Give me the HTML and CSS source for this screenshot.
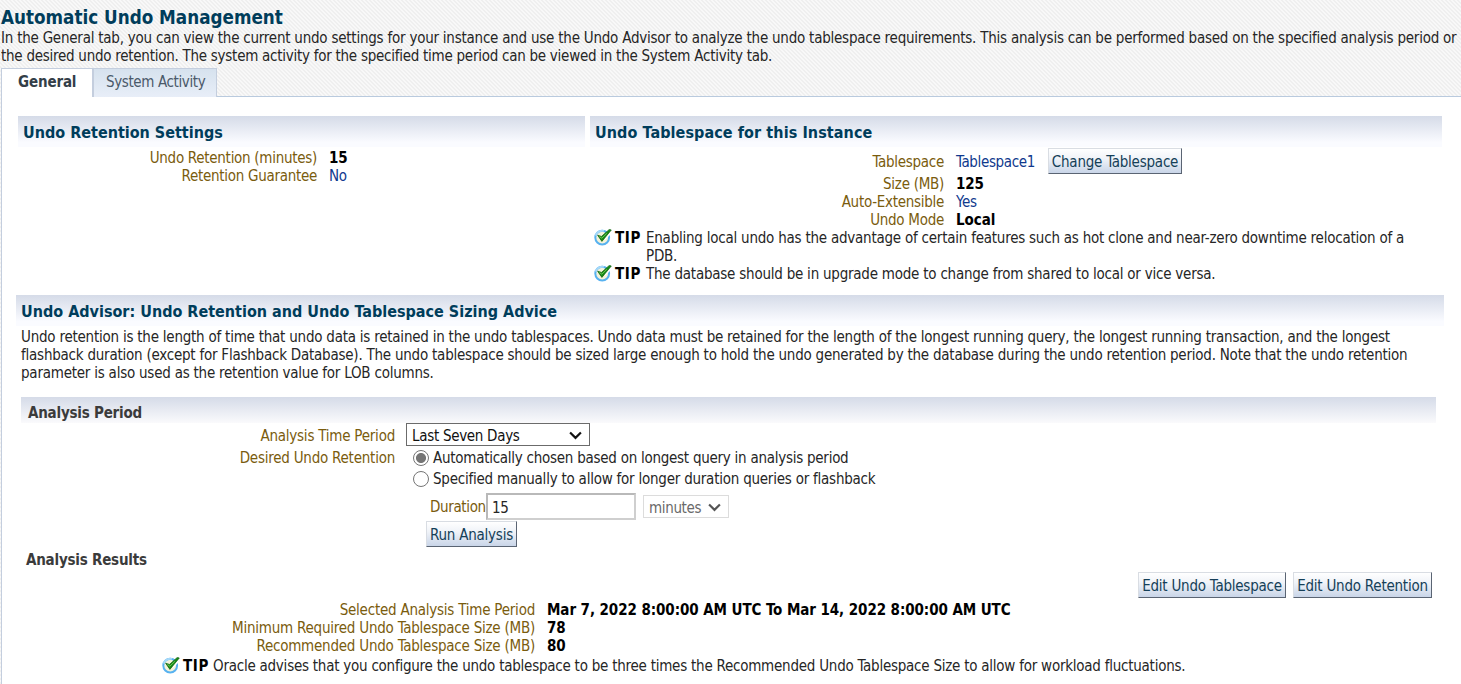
FILE: index.html
```html
<!DOCTYPE html>
<html lang="en">
<head>
<meta charset="utf-8">
<title>Automatic Undo Management</title>
<link rel="stylesheet" href="styles.css">
</head>
<body>
<svg width="0" height="0" class="defs" aria-hidden="true">
  <symbol id="tip" viewBox="0 0 18 17">
    <circle cx="8.2" cy="8.6" r="6.9" fill="#f5f3da" stroke="#58b2f0" stroke-width="2"/>
    <path d="M1.6 6.6A6.9 6.9 0 0 1 10 1.9" fill="none" stroke="#a5d8f8" stroke-width="2"/>
    <path d="M10.5 9.8L17.6 2.4" fill="none" stroke="#fff" stroke-width="2.6"/>
    <path d="M3.6 6.2l3.9 1.2 7.8-7 2 .6L7.9 12.4z" fill="#168a16" stroke="#0b5f0b" stroke-width=".7"/>
    <path d="M5.4 7.6l2.4 1.6 5-4.8" fill="none" stroke="#6cc455" stroke-width="1"/>
  </symbol>
</svg>
<header class="page-head">
  <h1>Automatic Undo Management</h1>
  <p>In the General tab, you can view the current undo settings for your instance and use the Undo Advisor to analyze the undo tablespace requirements. This analysis can be performed based on the specified analysis period or<br><span class="tight">the desired undo retention. The system activity for the specified time period can be viewed in the System Activity tab.</span></p>
</header>
<nav class="tabs">
  <a class="tab active">General</a>
  <a class="tab">System Activity</a>
  <span class="tab-line"></span>
</nav>
<main class="panel">
  <div class="columns">
    <section>
      <h2>Undo Retention Settings</h2>
      <dl class="fields retention">
        <dt>Undo Retention (minutes)</dt><dd><b>15</b></dd>
        <dt>Retention Guarantee</dt><dd><a>No</a></dd>
      </dl>
    </section>
    <section>
      <h2 class="wide">Undo Tablespace for this Instance</h2>
      <dl class="fields tablespace">
        <dt>Tablespace</dt><dd class="with-button"><a>Tablespace1</a><button class="btn change">Change Tablespace</button></dd>
        <dt>Size (MB)</dt><dd><b>125</b></dd>
        <dt>Auto-Extensible</dt><dd><a>Yes</a></dd>
        <dt>Undo Mode</dt><dd><b>Local</b></dd>
      </dl>
      <div class="tip"><svg class="tip-icon"><use href="#tip"/></svg><b>TIP</b><p>Enabling local undo has the advantage of certain features such as hot clone and near-zero downtime relocation of a<br>PDB.</p></div>
      <div class="tip"><svg class="tip-icon"><use href="#tip"/></svg><b>TIP</b><p>The database should be in upgrade mode to change from shared to local or vice versa.</p></div>
    </section>
  </div>
  <section class="advisor">
    <h2>Undo Advisor: Undo Retention and Undo Tablespace Sizing Advice</h2>
    <p class="advisor-text">Undo retention is the length of time that undo data is retained in the undo tablespaces. Undo data must be retained for the length of the longest running query, the longest running transaction, and the longest<br>flashback duration (except for Flashback Database). The undo tablespace should be sized large enough to hold the undo generated by the database during the undo retention period. Note that the undo retention<br>parameter is also used as the retention value for LOB columns.</p>
    <div class="analysis">
      <h3>Analysis Period</h3>
      <div class="form">
        <label class="period-label">Analysis Time Period</label>
        <div class="select period"><span>Last Seven Days</span><svg class="chevron" viewBox="0 0 12 8"><path d="M1 1.2l5 5 5-5"/></svg></div>
        <label class="desired-label">Desired Undo Retention</label>
        <div class="choices">
          <div class="choice tight"><span class="radio checked"></span>Automatically chosen based on longest query in analysis period</div>
          <div class="choice"><span class="radio"></span>Specified manually to allow for longer duration queries or flashback</div>
          <div class="duration"><label>Duration</label><div class="input">15</div><div class="select unit"><span>minutes</span><svg class="chevron" viewBox="0 0 12 8"><path d="M1 1.2l5 5 5-5"/></svg></div></div>
          <button class="btn run">Run Analysis</button>
        </div>
      </div>
    </div>
  </section>
  <section class="results">
    <h3>Analysis Results</h3>
    <div class="actions"><button class="btn edit-space">Edit Undo Tablespace</button><button class="btn edit-retention">Edit Undo Retention</button></div>
    <dl class="fields outcome">
      <dt>Selected Analysis Time Period</dt><dd><b>Mar 7, 2022 8:00:00 AM UTC To Mar 14, 2022 8:00:00 AM UTC</b></dd>
      <dt>Minimum Required Undo Tablespace Size (MB)</dt><dd><b>78</b></dd>
      <dt>Recommended Undo Tablespace Size (MB)</dt><dd><b>80</b></dd>
    </dl>
    <div class="tip"><svg class="tip-icon"><use href="#tip"/></svg><b>TIP</b><p>Oracle advises that you configure the undo tablespace to be three times the Recommended Undo Tablespace Size to allow for workload fluctuations.</p></div>
  </section>
</main>
</body>
</html>
```
FILE: styles.css
```css
* { box-sizing: border-box; margin: 0; padding: 0; }
html { overflow: hidden; }
body {
  height: 684px;
  overflow: hidden;
  display: flex;
  flex-direction: column;
  font: 15px/18px "DejaVu Sans Condensed", Tahoma, "DejaVu Sans", sans-serif;
  letter-spacing: -0.23px;
  color: #262626;
  white-space: nowrap;
  background: #f7f7f7 linear-gradient(45deg, #efefef 25%, #f8f8f8 25% 50%, #efefef 50% 75%, #f8f8f8 75%) 0 0 / 4px 4px;
}
.defs { display: none; }
.tight { letter-spacing: -0.26px; }
b { color: #000; letter-spacing: -0.08px; }
a { color: #10398d; }

.page-head { height: 68px; padding: 7px 0 0 1px; }
h1 { font-size: 18.7px; line-height: 22px; letter-spacing: 0; color: #003d5b; }

.tabs { display: flex; height: 29px; padding-left: 1px; }
.tab { height: 29px; padding-top: 4px; border: 1px solid #c4cede; border-left: 0; border-bottom: 0; color: #4b5a6a; }
.tab:not(.active) { width: 123px; padding-left: 12px; background: linear-gradient(#d6e2ee, #e8eef8); letter-spacing: -0.38px; }
.tab.active { width: 93px; padding-left: 16px; border-left: 1px solid #c4cede; border-right-width: 2px; background: #fff; color: #333e48; font-weight: bold; letter-spacing: -0.15px; }
.tab-line { flex: 1; border-bottom: 1px solid #b9cade; }

.panel { flex: 1; margin-left: 1px; border-left: 1px solid #c4cede; background: #fff; padding-top: 19px; }
.columns { display: grid; grid-template-columns: 567px 852px; gap: 5px; padding-left: 16px; height: 179px; }
h2 {
  height: 31px;
  padding: 1px 0 0 5px;
  font-size: 16px;
  line-height: 32px;
  letter-spacing: 0;
  color: #003d5b;
  background: linear-gradient(#d5dbe8, #fafbff 85%);
}
.wide { letter-spacing: 0.08px; }
.fields { display: grid; column-gap: 12px; grid-auto-rows: 18px; }
dt, label { color: #7a5c0e; }
dt { text-align: right; }
.retention { grid-template-columns: 299px 1fr; padding-top: 2px; }
.tablespace { grid-template-columns: 354px 1fr; padding-top: 1px; grid-template-rows: 27px; }
.tablespace dt, .retention dt { letter-spacing: -0.28px; }
.tablespace dt:first-child { padding-top: 5px; }
.with-button { display: flex; }
.with-button a { width: 92px; padding-top: 5px; letter-spacing: -0.35px; }

.btn {
  display: block;
  height: 26px;
  padding-top: 2px;
  font: inherit;
  letter-spacing: -0.23px;
  color: #153f58;
  text-align: center;
  background: linear-gradient(#fff, #f0f3f8 40%, #c9d5e8);
  border: 1px solid #d9dde3;
  border-right-color: #5a6473;
  border-bottom-color: #5a6473;
}
.change { width: 134px; }

.tip { display: flex; padding-left: 4px; }
.tip-icon { width: 18px; height: 17px; margin-right: 3px; }
.tip b { width: 31px; letter-spacing: 0.6px; }

.advisor { margin-left: 14px; width: 1428px; }
.advisor-text { padding: 2px 0 0 5px; height: 71px; }
.analysis { margin-left: 5px; width: 1415px; }
h3 { font-size: 15px; letter-spacing: -0.22px; color: #3b3b3b; }
.analysis h3 { height: 26px; padding-top: 1px; line-height: 31px; padding-left: 7px; background: linear-gradient(#d5dbe8, #fafafc); }
.form { display: grid; grid-template-columns: 374px 1fr; column-gap: 11px; }
.form > label { text-align: right; }
.period-label { padding-top: 4px; }
.desired-label { padding-top: 3px; }
.select { display: flex; height: 23px; border: 1px solid #6b6b6b; padding: 3px 0 0 5px; background: #fff; color: #111; }
.chevron { width: 13px; height: 9px; margin-top: 4px; fill: none; stroke: currentColor; stroke-width: 2; }
.period { width: 184px; justify-content: space-between; padding-right: 7px; letter-spacing: -0.3px; }
.choice { display: flex; height: 21px; padding: 3px 0 0 7px; }
.choice + .choice { height: 26px; }
.radio { width: 16px; height: 16px; margin: 1px 4px 0 0; border: 1px solid #757575; border-radius: 50%; background: #fff; }
.radio.checked { background: radial-gradient(circle, #757575 4.6px, #fff 5.4px); }
.duration { display: flex; height: 28px; padding-left: 24px; }
.duration label { width: 56px; padding-top: 5px; letter-spacing: -0.35px; }
.input { width: 150px; height: 27px; padding: 4px 0 0 4px; border: 2px solid #b9b9b9; border-right-color: #cfcfcf; border-bottom-color: #cfcfcf; background: #fff; }
.unit { width: 86px; margin: 2px 0 0 7px; border-color: #dcdcdc; color: #6a6a6a; letter-spacing: -0.35px; }
.unit .chevron { margin-left: 7px; color: #555; }
.run { width: 91px; margin-left: 20px; }

.results { padding-top: 4px; }
.results h3 { padding-left: 24px; height: 21px; }
.actions { display: flex; gap: 7px; padding-left: 1136px; }
.edit-space { width: 148px; }
.edit-retention { width: 139px; }
.outcome { grid-template-columns: 533px 1fr; padding-top: 3px; }
.results .tip { padding: 2px 0 0 160px; letter-spacing: -0.24px; }
.results .tip b { width: 30px; }
```
